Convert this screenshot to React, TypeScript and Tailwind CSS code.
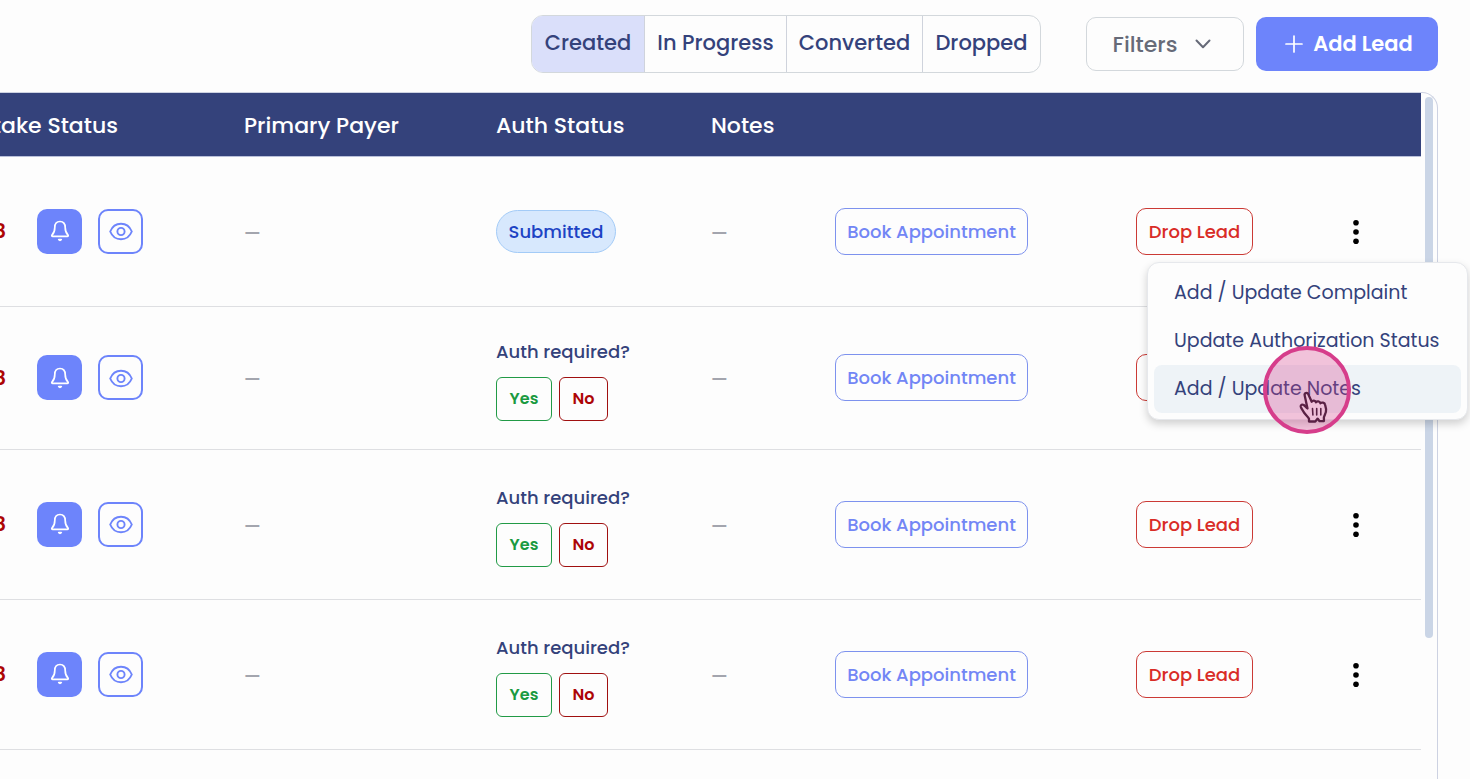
import React from "react";

const font = "font-['Poppins','Inter',sans-serif]";

const tabs = [
  { label: "Created", width: "w-[113px]", active: true },
  { label: "In Progress", width: "w-[142px]", active: false },
  { label: "Converted", width: "w-[136px]", active: false },
  { label: "Dropped", width: "w-[117px]", active: false },
];

const leads = [
  { id: 1, auth: "submitted", height: "h-[150px]", menuOpen: true },
  { id: 2, auth: "pending", height: "h-[143px]", menuOpen: false },
  { id: 3, auth: "pending", height: "h-[150px]", menuOpen: false },
  { id: 4, auth: "pending", height: "h-[150px]", menuOpen: false },
];

const menuItems = [
  { label: "Add / Update Complaint", hovered: false },
  { label: "Update Authorization Status", hovered: false },
  { label: "Add / Update Notes", hovered: true },
];

function BellIcon() {
  return (
    <svg width="24" height="24" viewBox="0 0 24 24" fill="none" stroke="currentColor" strokeWidth="1.700" strokeLinecap="round" strokeLinejoin="round" aria-hidden="true">
      <path d="M12 2.500C8.600 2.500 6.800 5 6.800 8.400c0 4-.9 5.600-2.700 7.500-.6.700-.3 1.500.6 1.500h14.600c.9 0 1.200-.8.600-1.500-1.800-1.900-2.700-3.500-2.700-7.500C17.200 5 15.400 2.500 12 2.500Z" />
      <path d="M10.700 20.600c.7.900 1.900.9 2.600 0Z" />
    </svg>
  );
}

function EyeIcon() {
  return (
    <svg width="26" height="26" viewBox="0 0 26 26" fill="none" stroke="currentColor" strokeWidth="1.900" strokeLinejoin="round" aria-hidden="true">
      <path d="M2.200 13.500C4.300 8.300 8.300 5.700 13 5.700s8.700 2.600 10.800 7.800c-2.100 5.200-6.100 7.800-10.800 7.800s-8.700-2.600-10.800-7.800Z" />
      <circle cx="13" cy="13.500" r="3.600" />
    </svg>
  );
}

function PointerIcon() {
  return (
    <svg width="32" height="34" viewBox="0 0 32 34" fill="#efc0da" stroke="#5a2145" strokeWidth="2.300" strokeLinejoin="round" strokeLinecap="round" aria-hidden="true">
      <path d="M11 31.500v-2.700c-1-2-3.500-4-5-6.300-1-1.700-3-4.300-3.300-6-.2-1.700 1.600-2.400 3-1.500 1.300.8 2.300 2.200 3.800 3.500L6.700 5.500C6 3 9.300 1.900 10.300 4.300l3.400 7.500c.8-1.600 3.700-1.500 4.200.5 1-1.500 4-1.200 4.500 1 1.200-1.200 4.300-.8 4.700 1.500l1 4.400c.4 3.300-1.600 5.800-2.200 8.100v3.700l-4.300.2-1.900-2.600-2.400 2.900Z" />
      <path d="M14.500 18.500l.4 6.500M18.700 18.500v6.500M22.800 18.500v6.500" strokeWidth="1.600" />
    </svg>
  );
}

function ActionsMenu() {
  return (
    <div role="menu" className="absolute top-full left-[-188px] z-10 mt-1.5 w-[321px] rounded-xl border border-[#e6e8ec] bg-[#fdfdfd] p-1.5 shadow-[0_4px_8px_rgba(0,0,0,0.18)]">
      {menuItems.map((item) => (
        <button
          key={item.label}
          type="button"
          role="menuitem"
          className={`relative flex h-12 w-full items-center rounded-lg px-5 text-left text-[19px] font-normal whitespace-nowrap text-[#34427b] ${item.hovered ? "bg-[#eef3f7]" : ""}`}
        >
          {item.label}
          {item.hovered && (
            <span className="pointer-events-none absolute top-[-19px] left-[109px] size-[88px] rounded-full border-4 border-[#d63d8b] bg-[#d63d8b]/30 text-left">
              <span className="absolute top-10 left-[31px]">
                <PointerIcon />
              </span>
            </span>
          )}
        </button>
      ))}
    </div>
  );
}

function AuthCell({ status }: { status: string }) {
  if (status === "submitted") {
    return (
      <span className="inline-flex h-[43px] w-[120px] items-center justify-center rounded-full border border-[#a3cbf7] bg-[#d7e8fd] text-[18px] font-medium text-[#1d43c4]">
        Submitted
      </span>
    );
  }
  return (
    <div className="flex flex-col gap-[13px] pt-[5px]">
      <p className="text-[18px] leading-6 font-medium whitespace-nowrap text-[#34427b]">Auth required?</p>
      <div className="flex gap-[7px]">
        <button type="button" className="h-11 w-14 rounded-md border border-[#219a46] text-[16px] font-semibold text-[#1b9a41]">Yes</button>
        <button type="button" className="h-11 w-[49px] rounded-md border border-[#a01010] text-[16px] font-semibold text-[#ad0505]">No</button>
      </div>
    </div>
  );
}

export default function App() {
  return (
    <div className={`flex h-screen flex-col overflow-hidden bg-[#fdfdfd] ${font}`}>
      <header className="flex shrink-0 items-center justify-end pt-[15px] pr-8 pb-[19px]">
        <nav className="mr-[45px] flex h-[58px] divide-x divide-[#cfd3dc] overflow-hidden rounded-xl border border-[#d3d8dc]">
          {tabs.map((tab) => (
            <button
              key={tab.label}
              type="button"
              className={`${tab.width} pb-0.5 text-[21px] font-medium whitespace-nowrap text-[#34427b] ${tab.active ? "bg-[#dadffa]" : ""}`}
            >
              {tab.label}
            </button>
          ))}
        </nav>
        <button type="button" className="mr-3 flex h-[54px] w-[158px] items-center justify-center gap-4 rounded-[10px] border border-[#d3d8dc] pr-1 text-[22px] font-medium text-[#666a78]">
          Filters
          <svg width="20" height="20" viewBox="0 0 20 20" fill="none" stroke="currentColor" strokeWidth="2" strokeLinecap="round" strokeLinejoin="round" aria-hidden="true">
            <path d="M3.500 6.500 10 13.200l6.500-6.700" />
          </svg>
        </button>
        <button type="button" className="flex h-[54px] w-[182px] items-center justify-center gap-2.5 rounded-[10px] bg-[#6d84fb] pl-1 text-[21px] font-semibold text-white">
          <svg width="18" height="18" viewBox="0 0 18 18" fill="none" stroke="currentColor" strokeWidth="1.700" strokeLinecap="round" aria-hidden="true">
            <path d="M9 1v16M1 9h16" />
          </svg>
          Add Lead
        </button>
      </header>

      <main className="mr-8 flex min-h-0 flex-1 items-start rounded-tr-2xl border-t border-r border-[#cdd2e2]">
        <table className="min-w-0 flex-1 table-fixed border-collapse text-left">
          <thead>
            <tr className="h-[63px] border-b border-[#b9c0da] bg-[#34427b] text-[22px] font-medium text-white">
              <th className="w-[220px] px-0 pt-0.5 pb-0 font-medium">
                <div className="flex w-[118px] justify-end overflow-hidden whitespace-nowrap">Intake Status</div>
              </th>
              <th className="w-[252px] px-6 pt-0.5 font-medium whitespace-nowrap">Primary Payer</th>
              <th className="w-[215px] px-6 pt-0.5 font-medium whitespace-nowrap">Auth Status</th>
              <th className="w-[124px] px-6 pt-0.5 font-medium">Notes</th>
              <th className="w-[301px] px-6" />
              <th className="px-6" />
              <th className="w-[104px]" />
            </tr>
          </thead>
          <tbody>
            {leads.map((lead) => (
              <tr key={lead.id} className={`${lead.height} border-b border-[#dedfe2]`}>
                <td className="p-0">
                  <div className="flex w-[143px] items-center justify-end gap-4 overflow-hidden">
                    <span className="mr-[15px] text-[20px] font-semibold whitespace-nowrap text-[#ad0505]">8</span>
                    <button type="button" aria-label="Send reminder" className="flex size-[45px] shrink-0 items-center justify-center rounded-[10px] bg-[#6d84fb] text-white">
                      <BellIcon />
                    </button>
                    <button type="button" aria-label="View intake" className="flex size-[45px] shrink-0 items-center justify-center rounded-[10px] border-2 border-[#6d84fb] text-[#6d84fb]">
                      <EyeIcon />
                    </button>
                  </div>
                </td>
                <td className="px-6 pt-0.5 text-[18px] font-semibold text-[#a3a5ae]">—</td>
                <td className="px-6">
                  <AuthCell status={lead.auth} />
                </td>
                <td className="px-6 pt-0.5 text-[18px] font-semibold text-[#a3a5ae]">—</td>
                <td className="px-6">
                  <button type="button" className="h-[47px] w-[193px] rounded-[10px] border border-[#7d92ee] text-[18px] font-medium whitespace-nowrap text-[#7286f5]">Book Appointment</button>
                </td>
                <td className="px-6">
                  <button type="button" className="h-[47px] w-[117px] rounded-[10px] border border-[#cb3a35] text-[18px] font-medium whitespace-nowrap text-[#d92c27]">Drop Lead</button>
                </td>
                <td className="px-0 pt-0.5 pb-0">
                  <div className="relative ml-[18px] w-[42px]">
                    <button type="button" aria-label="More actions" className="flex h-12 w-[42px] items-center justify-center text-black">
                      <svg width="8" height="26" viewBox="0 0 8 26" fill="currentColor" aria-hidden="true">
                        <circle cx="4" cy="3.700" r="2.800" />
                        <circle cx="4" cy="13" r="2.800" />
                        <circle cx="4" cy="22.300" r="2.800" />
                      </svg>
                    </button>
                    {lead.menuOpen && <ActionsMenu />}
                  </div>
                </td>
              </tr>
            ))}
          </tbody>
        </table>
        <div className="w-4 shrink-0 p-1">
          <div className="h-[541px] w-2 rounded-full bg-[#cad5e6]" />
        </div>
      </main>
    </div>
  );
}
